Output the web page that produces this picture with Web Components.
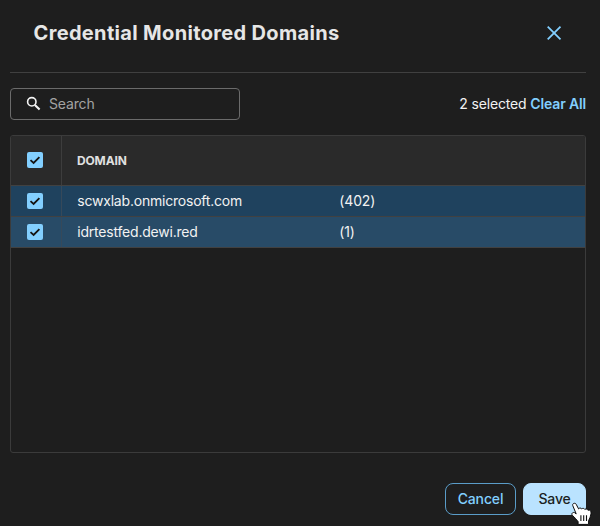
<!DOCTYPE html>
<html lang="en">
<head>
<meta charset="utf-8">
<title>Credential Monitored Domains</title>
<style>
    html, body{
        margin: 0;
        height: 100%;
        overflow: hidden;
        background: #1e1e1e;
    }
    body{
        font-family: Inter, "Liberation Sans", sans-serif;
        font-size: 14px;
        letter-spacing: -0.15px;
        color: #f2f2f2;
    }
</style>
</head>
<body>
<domains-modal>
    <span slot="title">Credential Monitored Domains</span>
    <search-field slot="tools" placeholder="Search"></search-field>
    <selection-info slot="tools" count="2"></selection-info>
    <domain-table>
        <domain-row count="402">scwxlab.onmicrosoft.com</domain-row>
        <domain-row count="1" alt>idrtestfed.dewi.red</domain-row>
    </domain-table>
    <action-button slot="actions" class="cancel">Cancel</action-button>
    <action-button slot="actions" primary>Save</action-button>
</domains-modal>

<script>
class DomainsModal extends HTMLElement {
    constructor() {
        super();
        this.attachShadow({mode:'open'})
        this.shadowRoot.innerHTML = `
        <style>
            :host{
                display: flex;
                flex-direction: column;
                box-sizing: border-box;
                height: 526px;
                padding: 0 14px 11px 10px;
            }
            header{
                box-sizing: border-box;
                height: 73px;
                padding: 0 24px 7px 23.5px;
                display: flex;
                align-items: center;
                justify-content: space-between;
                border-bottom: 1px solid #404040;
            }
            h1{
                margin: 0;
                font-size: 20px;
                line-height: 24px;
                font-weight: 700;
                color: #e6e6e6;
            }
            slot[name="title"]{
                letter-spacing: 0.34px;
            }
            header svg{
                display: block;
            }
            #tools{
                height: 32px;
                margin: 15px 0;
                display: flex;
                align-items: center;
                justify-content: space-between;
            }
            #main{
                flex: 1;
                display: flex;
                min-height: 0;
            }
            #actions{
                margin-top: 30px;
                display: flex;
                justify-content: flex-end;
                gap: 7px;
            }
        </style>
        <header>
            <h1><slot name="title"></slot></h1>
            <svg id="close" width="16" height="16" viewBox="0 0 16 16" fill="none" stroke="#82cfff" stroke-width="1.8">
                <path d="M1.7 1.7 14.5 14.3M14.5 1.7 1.7 14.3"/>
            </svg>
        </header>
        <section id="tools"><slot name="tools"></slot></section>
        <section id="main"><slot></slot></section>
        <section id="actions"><slot name="actions"></slot></section>
        `
    }
}

class SearchField extends HTMLElement {
    constructor() {
        super();
        this.attachShadow({mode:'open'})
        this.shadowRoot.innerHTML = `
        <style>
            :host{
                display: flex;
                align-items: center;
                box-sizing: border-box;
                width: 230px;
                height: 32px;
                padding: 0 0 1px 15px;
                gap: 8px;
                border: 1px solid #6b6b6b;
                border-radius: 4px;
                color: #a3a3a3;
            }
        </style>
        <svg width="15" height="15" viewBox="0 0 15 15" fill="none" stroke="#f4f4f4">
            <circle cx="5.8" cy="5.8" r="4.2" stroke-width="1.6"/>
            <path d="M8.9 8.9 13.6 13.6" stroke-width="2.1"/>
        </svg>
        <span></span>
        `
        this.shadowRoot.querySelector('span').textContent = this.getAttribute('placeholder')
    }
}

class SelectionInfo extends HTMLElement {
    constructor() {
        super();
        this.attachShadow({mode:'open'})
        this.shadowRoot.innerHTML = `
        <style>
            :host{
                display: block;
                padding-bottom: 1px;
                white-space: nowrap;
            }
            a{
                color: #82cfff;
                font-weight: 600;
            }
        </style>
        <span>${this.getAttribute('count')} selected</span> <a>Clear All</a>
        `
    }
}

class CheckBox extends HTMLElement {
    constructor() {
        super();
        this.attachShadow({mode:'open'})
        this.shadowRoot.innerHTML = `
        <style>
            :host{
                display: block;
                width: 16px;
                height: 16px;
                border-radius: 2px;
                background: #82cfff;
            }
            svg{
                display: block;
            }
        </style>
        <svg width="16" height="16" viewBox="0 0 16 16" fill="none" stroke="#151515" stroke-width="1.8">
            <path d="M3.5 8.1 6.6 11 12.4 5.2"/>
        </svg>
        `
    }
}

class DomainTable extends HTMLElement {
    constructor() {
        super();
        this.attachShadow({mode:'open'})
        this.shadowRoot.innerHTML = `
        <style>
            :host{
                display: block;
                flex: 1;
                border: 1px solid #3b3b3b;
                border-radius: 3px;
                overflow: hidden;
            }
            #head{
                display: flex;
                height: 49px;
                background: #2a2a2a;
                border-bottom: 1px solid #414141;
            }
            #check{
                box-sizing: border-box;
                width: 51px;
                padding: 0 0 1px 15.6px;
                display: flex;
                align-items: center;
                border-right: 1px solid #3d3d3d;
            }
            #label{
                padding: 0 0 1px 15px;
                display: flex;
                align-items: center;
                font-size: 12px;
                font-weight: 700;
                color: #e0e0e0;
            }
        </style>
        <div id="head">
            <div id="check"><check-box></check-box></div>
            <div id="label">DOMAIN</div>
        </div>
        <slot></slot>
        `
    }
}

class DomainRow extends HTMLElement {
    constructor() {
        super();
        this.attachShadow({mode:'open'})
        this.shadowRoot.innerHTML = `
        <style>
            :host{
                display: flex;
                height: 30px;
                background: #1f425e;
                border-bottom: 1px solid #414141;
            }
            :host([alt]){
                background: #284b67;
            }
            div{
                display: flex;
                align-items: center;
            }
            #check{
                box-sizing: border-box;
                width: 51px;
                padding-left: 15.6px;
                border-right: 1px solid #36495a;
            }
            #name{
                width: 262px;
                padding: 0 0 2px 15.3px;
                letter-spacing: -0.21px;
            }
            #count{
                padding-bottom: 2px;
            }
        </style>
        <div id="check"><check-box></check-box></div>
        <div id="name"><span><slot></slot></span></div>
        <div id="count">(${this.getAttribute('count')})</div>
        `
    }
}

class ActionButton extends HTMLElement {
    constructor() {
        super();
        this.attachShadow({mode:'open'})
        this.shadowRoot.innerHTML = `
        <style>
            :host{
                display: flex;
                align-items: center;
                justify-content: center;
                box-sizing: border-box;
                width: 71px;
                height: 32px;
                padding-bottom: 1px;
                border: 1px solid #5a9cc8;
                border-radius: 8px;
                color: #82cfff;
                font-weight: 500;
            }
            :host([primary]){
                position: relative;
                width: 63px;
                background: #bae3ff;
                border-color: #bae3ff;
                color: #1b1f23;
            }
            svg{
                display: none;
            }
            :host([primary]) svg{
                display: block;
                position: absolute;
                left: 47px;
                top: 18px;
            }
        </style>
        <slot></slot>
        <!-- hand pointer -->
        <svg width="22" height="24" viewBox="0 0 22 24">
            <path d="M1.7 3.4C1.1 1.4 4.2.4 5.2 2.3L7.6 6.9C8.3 5.7 10.2 5.8 10.7 7 11.6 5.9 13.3 6.3 13.9 7.5 14.8 6.6 16.4 7 17 8.3 18.4 7.5 20 8.3 20 10 20.2 12.2 19.5 13.8 18.9 15.9L17.6 18.6V22.4H7.1V19.6C5.3 17.6 4 15.6 1.6 13.6-.1 12 1.5 9.9 3.5 10.6L5.2 11.9Z" fill="#fff" stroke="#0c0c0c" stroke-width="1" stroke-linejoin="round"/>
            <path d="M9.9 13.2V19M12.7 13.2V19M15.5 13.2V19" stroke="#111" stroke-width="1.1"/>
        </svg>
        `
    }
}

customElements.define('check-box',CheckBox)
customElements.define('search-field',SearchField)
customElements.define('selection-info',SelectionInfo)
customElements.define('domain-row',DomainRow)
customElements.define('domain-table',DomainTable)
customElements.define('action-button',ActionButton)
customElements.define('domains-modal',DomainsModal)
</script>
</body>
</html>
